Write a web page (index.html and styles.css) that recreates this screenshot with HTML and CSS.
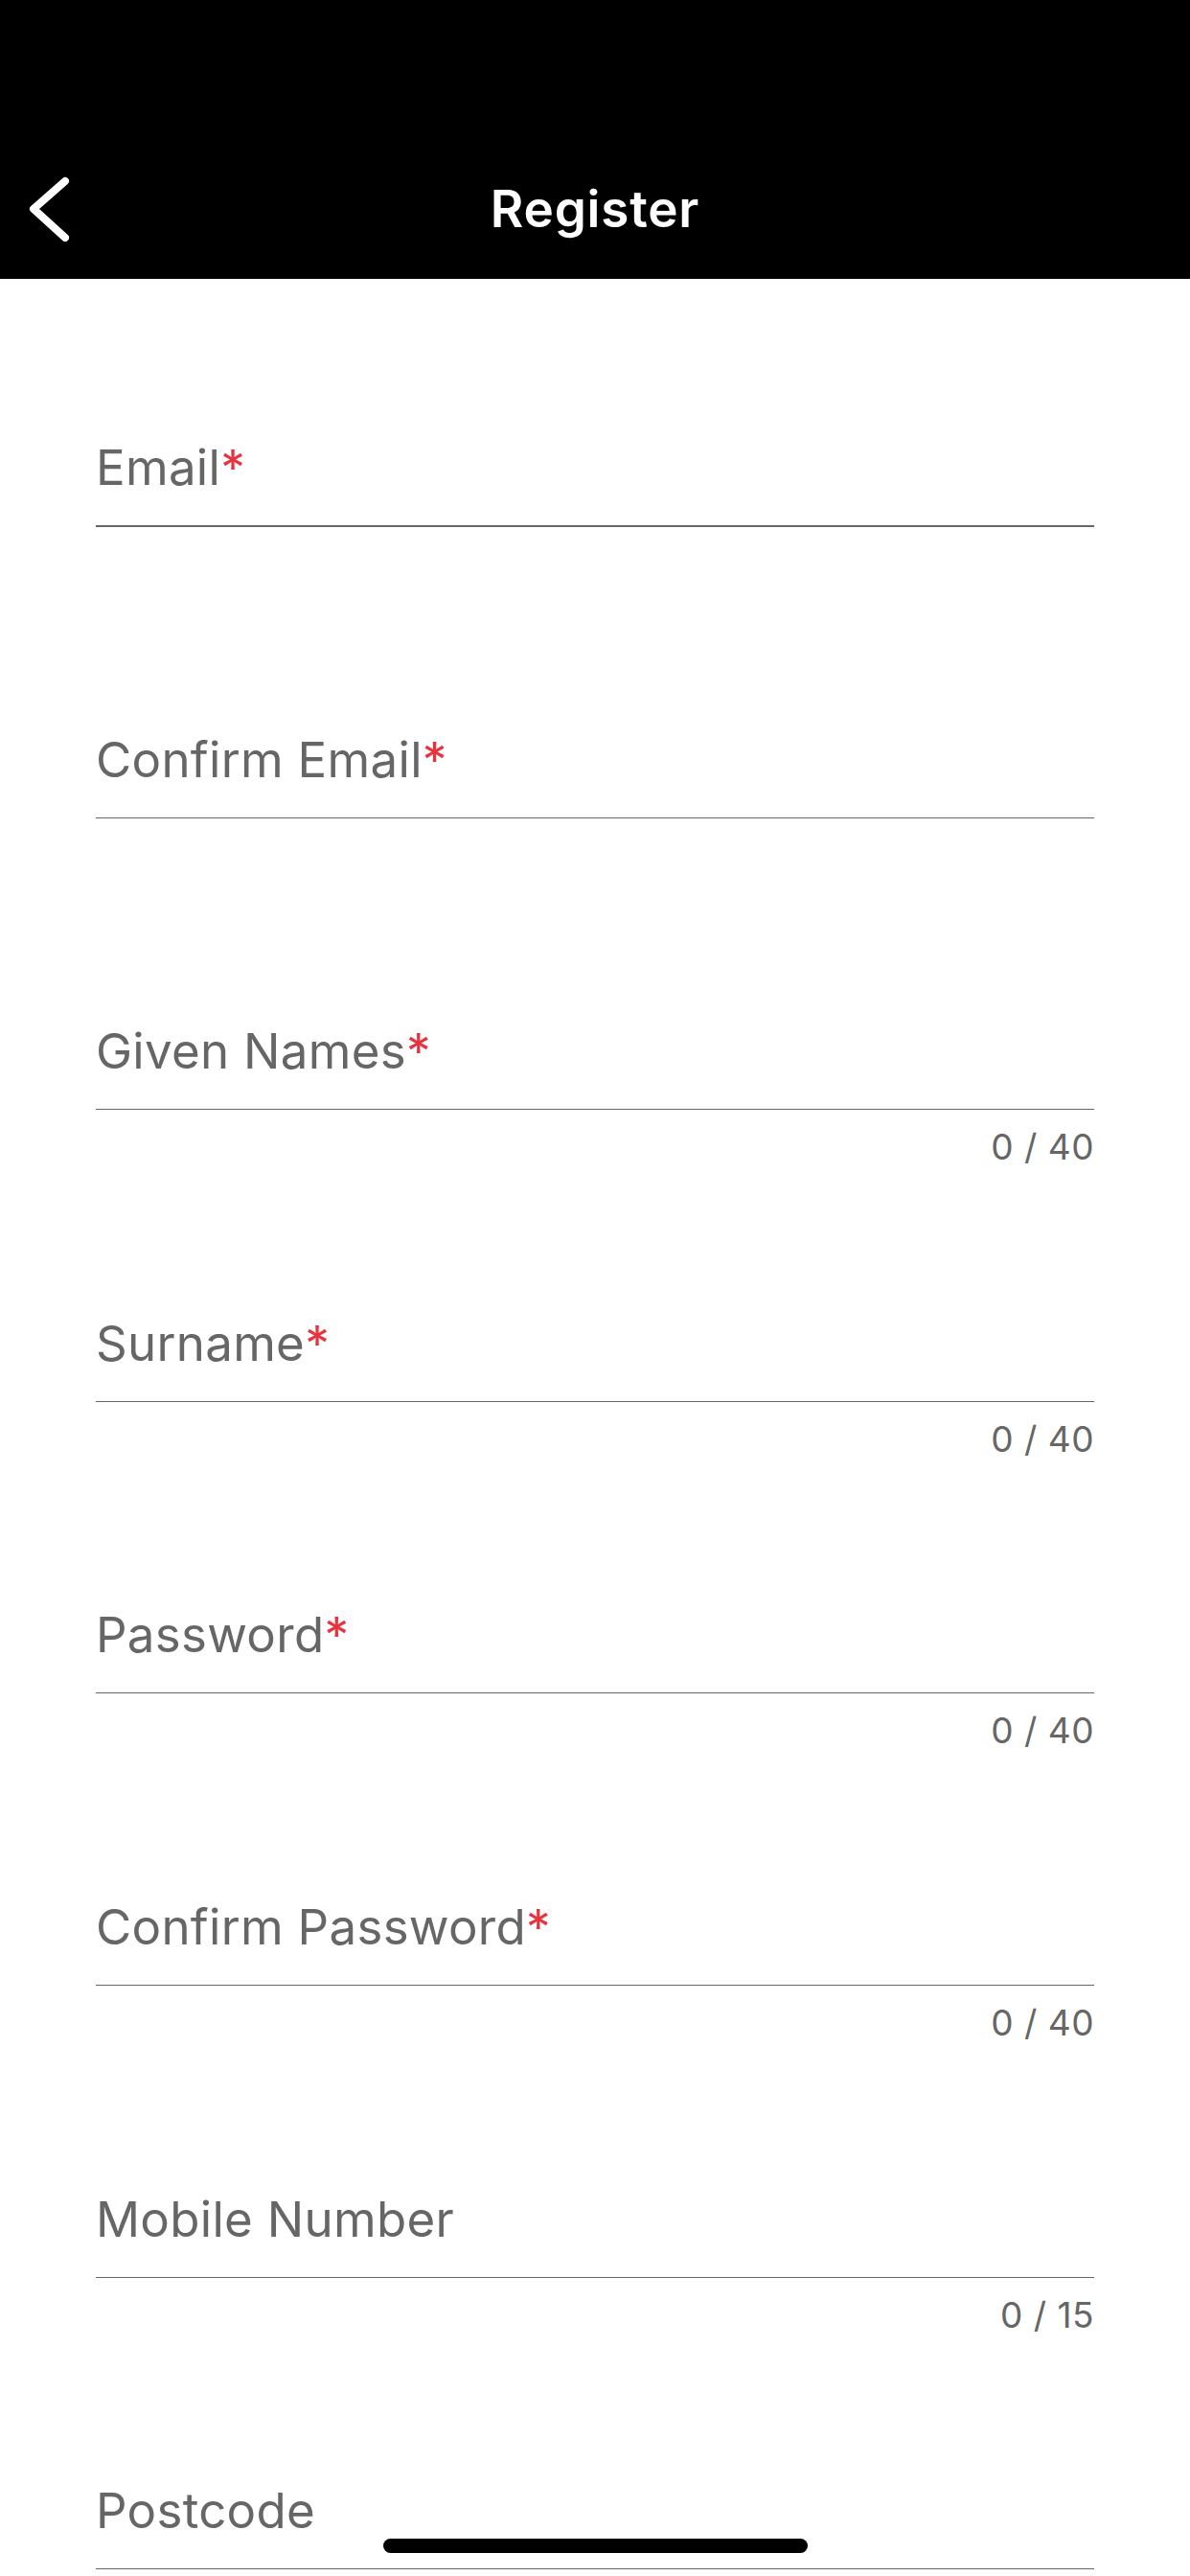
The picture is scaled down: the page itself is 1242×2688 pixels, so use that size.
FILE: index.html
```html
<!DOCTYPE html>
<html lang="en">
<head>
  <meta charset="UTF-8">
  <title>Register</title>
  <link rel="stylesheet" href="styles.css">
</head>
<body>

<div class="screen">
  <header>
    <div class="nav">
      <button class="back" onclick="history.back()">
        <svg width="60" height="80" viewBox="0 0 60 80">
          <path d="M48 11 L15 40 L48 70" fill="none" stroke="#fff" stroke-width="8" stroke-linecap="round" stroke-linejoin="round"/>
        </svg>
      </button>
      <div class="title">Register</div>
      <div></div>
    </div>
  </header>

  <div class="form">
    <div class="field">
      <div class="input focused">Email<span class="req">*</span></div>
    </div>
    <div class="field">
      <div class="input">Confirm Email<span class="req">*</span></div>
    </div>
    <div class="field">
      <div class="input">Given Names<span class="req">*</span></div>
      <div class="counter">0 / 40</div>
    </div>
    <div class="field">
      <div class="input">Surname<span class="req">*</span></div>
      <div class="counter">0 / 40</div>
    </div>
    <div class="field">
      <div class="input">Password<span class="req">*</span></div>
      <div class="counter">0 / 40</div>
    </div>
    <div class="field">
      <div class="input">Confirm Password<span class="req">*</span></div>
      <div class="counter">0 / 40</div>
    </div>
    <div class="field">
      <div class="input">Mobile Number</div>
      <div class="counter">0 / 15</div>
    </div>
    <div class="field">
      <div class="input">Postcode</div>
    </div>
  </div>

  <div class="home-bar"></div>
</div>

</body>
</html>
```

FILE: styles.css
```css
body { margin:0; font-family:Inter,'Liberation Sans',sans-serif; background:#fff; color:#666; }
.screen { position:relative; width:1242px; height:2688px; overflow:hidden; }
header { height:291px; box-sizing:border-box; padding-top:158px; background:#000; }
.nav { height:120px; display:grid; grid-template-columns:1fr auto 1fr; align-items:center; }
.back { background:none; border:none; padding:0 0 0 20px; width:100px; height:80px; display:flex; align-items:center; cursor:pointer; }
.back svg { display:block; }
.title { color:#fff; font-size:53px; line-height:60px; font-weight:600; letter-spacing:0.8px; }
.form { padding:167px 100px 0; }
.field { height:304.6px; }
.input { font-size:51px; line-height:60px; letter-spacing:0.3px; padding-bottom:30px; border-bottom:1px solid #666; }
.input.focused { border-bottom-width:2px; margin-bottom:-1px; }
.req { color:#e8333f; }
.counter { margin-top:17px; font-size:37px; line-height:44px; letter-spacing:0.5px; text-align:right; }
.home-bar { position:absolute; left:400px; top:2649px; width:443px; height:15px; border-radius:8px; background:#000; }
```
